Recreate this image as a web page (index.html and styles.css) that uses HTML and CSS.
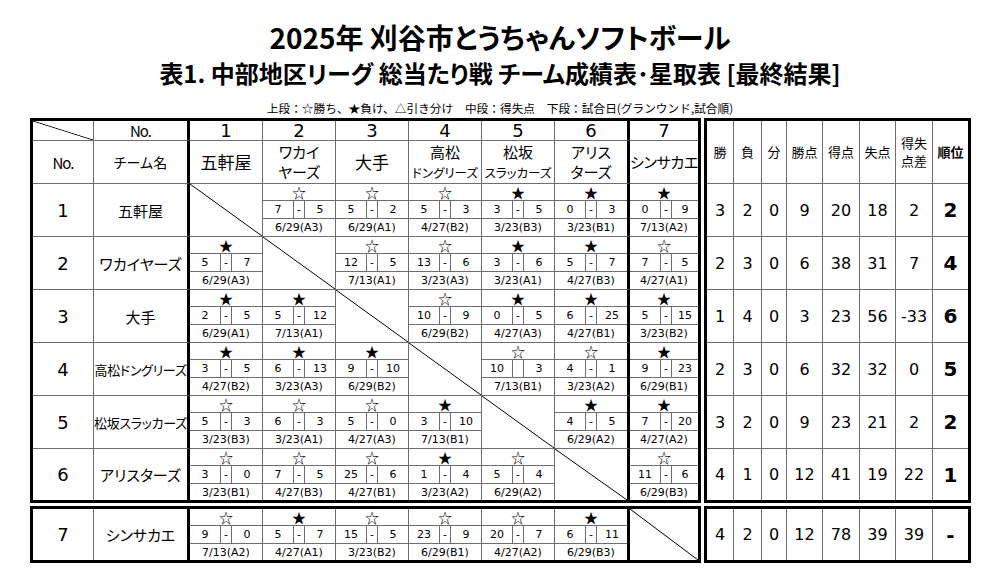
FILE: index.html
```html
<!DOCTYPE html>
<html lang="ja">
<head>
<meta charset="utf-8">
<title>星取表</title>
<link rel="stylesheet" href="styles.css">
</head>
<body>
<div class="page">
  <h1 class="title">2025年 刈谷市とうちゃんソフトボール</h1>
  <h2 class="subtitle">表1. 中部地区リーグ 総当たり戦 チーム成績表･星取表 [最終結果]</h2>
  <p class="legend">上段：☆勝ち、★負け、△引き分け　中段：得失点　下段：試合日(グランウンド,試合順)</p>

  <div class="board">
    <div class="block">
      <table class="matrix">
        <colgroup><col class="w-no"><col class="w-name"><col class="w-c"><col class="w-c"><col class="w-c"><col class="w-c"><col class="w-c"><col class="w-c6"><col class="w-c7"></colgroup>
        <tr class="hA"><td class="dg"></td><td class="nolbl">No.</td><td>1</td><td>2</td><td>3</td><td>4</td><td>5</td><td>6</td><td>7</td></tr>
        <tr class="hB"><td class="lbl">No.</td><td class="lbl sm">チーム名</td><td class="hn">五軒屋</td><td class="hn two">ワカイ<br>ヤーズ</td><td class="hn">大手</td><td class="hn two">高松<br><span class="hs">ドングリーズ</span></td><td class="hn two">松坂<br><span class="hs">スラッカーズ</span></td><td class="hn two">アリス<br>ターズ</td><td class="hn nar">シンサカエ</td></tr>

        <tr class="r"><td class="no">1</td><td class="name">五軒屋</td>
          <td class="dg"></td>
          <td><div class="m"><div class="st">☆</div><div class="sc"><span>7</span><span>-</span><span>5</span></div><div class="dt">6/29(A3)</div></div></td>
          <td><div class="m"><div class="st">☆</div><div class="sc"><span>5</span><span>-</span><span>2</span></div><div class="dt">6/29(A1)</div></div></td>
          <td><div class="m"><div class="st">☆</div><div class="sc"><span>5</span><span>-</span><span>3</span></div><div class="dt">4/27(B2)</div></div></td>
          <td><div class="m"><div class="st">★</div><div class="sc"><span>3</span><span>-</span><span>5</span></div><div class="dt">3/23(B3)</div></div></td>
          <td><div class="m"><div class="st">★</div><div class="sc"><span>0</span><span>-</span><span>3</span></div><div class="dt">3/23(B1)</div></div></td>
          <td><div class="m"><div class="st">★</div><div class="sc"><span>0</span><span>-</span><span>9</span></div><div class="dt">7/13(A2)</div></div></td>
        </tr>
        <tr class="r"><td class="no">2</td><td class="name">ワカイヤーズ</td>
          <td><div class="m"><div class="st">★</div><div class="sc"><span>5</span><span>-</span><span>7</span></div><div class="dt">6/29(A3)</div></div></td>
          <td class="dg"></td>
          <td><div class="m"><div class="st">☆</div><div class="sc"><span>12</span><span>-</span><span>5</span></div><div class="dt">7/13(A1)</div></div></td>
          <td><div class="m"><div class="st">☆</div><div class="sc"><span>13</span><span>-</span><span>6</span></div><div class="dt">3/23(A3)</div></div></td>
          <td><div class="m"><div class="st">★</div><div class="sc"><span>3</span><span>-</span><span>6</span></div><div class="dt">3/23(A1)</div></div></td>
          <td><div class="m"><div class="st">★</div><div class="sc"><span>5</span><span>-</span><span>7</span></div><div class="dt">4/27(B3)</div></div></td>
          <td><div class="m"><div class="st">☆</div><div class="sc"><span>7</span><span>-</span><span>5</span></div><div class="dt">4/27(A1)</div></div></td>
        </tr>
        <tr class="r"><td class="no">3</td><td class="name">大手</td>
          <td><div class="m"><div class="st">★</div><div class="sc"><span>2</span><span>-</span><span>5</span></div><div class="dt">6/29(A1)</div></div></td>
          <td><div class="m"><div class="st">★</div><div class="sc"><span>5</span><span>-</span><span>12</span></div><div class="dt">7/13(A1)</div></div></td>
          <td class="dg"></td>
          <td><div class="m"><div class="st">☆</div><div class="sc"><span>10</span><span>-</span><span>9</span></div><div class="dt">6/29(B2)</div></div></td>
          <td><div class="m"><div class="st">★</div><div class="sc"><span>0</span><span>-</span><span>5</span></div><div class="dt">4/27(A3)</div></div></td>
          <td><div class="m"><div class="st">★</div><div class="sc"><span>6</span><span>-</span><span>25</span></div><div class="dt">4/27(B1)</div></div></td>
          <td><div class="m"><div class="st">★</div><div class="sc"><span>5</span><span>-</span><span>15</span></div><div class="dt">3/23(B2)</div></div></td>
        </tr>
        <tr class="r"><td class="no">4</td><td class="name small">高松ドングリーズ</td>
          <td><div class="m"><div class="st">★</div><div class="sc"><span>3</span><span>-</span><span>5</span></div><div class="dt">4/27(B2)</div></div></td>
          <td><div class="m"><div class="st">★</div><div class="sc"><span>6</span><span>-</span><span>13</span></div><div class="dt">3/23(A3)</div></div></td>
          <td><div class="m"><div class="st">★</div><div class="sc"><span>9</span><span>-</span><span>10</span></div><div class="dt">6/29(B2)</div></div></td>
          <td class="dg"></td>
          <td><div class="m"><div class="st">☆</div><div class="sc"><span>10</span><span></span><span>3</span></div><div class="dt">7/13(B1)</div></div></td>
          <td><div class="m"><div class="st">☆</div><div class="sc"><span>4</span><span>-</span><span>1</span></div><div class="dt">3/23(A2)</div></div></td>
          <td><div class="m"><div class="st">★</div><div class="sc"><span>9</span><span>-</span><span>23</span></div><div class="dt">6/29(B1)</div></div></td>
        </tr>
        <tr class="r"><td class="no">5</td><td class="name small">松坂スラッカーズ</td>
          <td><div class="m"><div class="st">☆</div><div class="sc"><span>5</span><span>-</span><span>3</span></div><div class="dt">3/23(B3)</div></div></td>
          <td><div class="m"><div class="st">☆</div><div class="sc"><span>6</span><span>-</span><span>3</span></div><div class="dt">3/23(A1)</div></div></td>
          <td><div class="m"><div class="st">☆</div><div class="sc"><span>5</span><span>-</span><span>0</span></div><div class="dt">4/27(A3)</div></div></td>
          <td><div class="m"><div class="st">★</div><div class="sc"><span>3</span><span>-</span><span>10</span></div><div class="dt">7/13(B1)</div></div></td>
          <td class="dg"></td>
          <td><div class="m"><div class="st">★</div><div class="sc"><span>4</span><span>-</span><span>5</span></div><div class="dt">6/29(A2)</div></div></td>
          <td><div class="m"><div class="st">★</div><div class="sc"><span>7</span><span>-</span><span>20</span></div><div class="dt">4/27(A2)</div></div></td>
        </tr>
        <tr class="r last"><td class="no">6</td><td class="name">アリスターズ</td>
          <td><div class="m"><div class="st">☆</div><div class="sc"><span>3</span><span>-</span><span>0</span></div><div class="dt">3/23(B1)</div></div></td>
          <td><div class="m"><div class="st">☆</div><div class="sc"><span>7</span><span>-</span><span>5</span></div><div class="dt">4/27(B3)</div></div></td>
          <td><div class="m"><div class="st">☆</div><div class="sc"><span>25</span><span>-</span><span>6</span></div><div class="dt">4/27(B1)</div></div></td>
          <td><div class="m"><div class="st">★</div><div class="sc"><span>1</span><span>-</span><span>4</span></div><div class="dt">3/23(A2)</div></div></td>
          <td><div class="m"><div class="st">☆</div><div class="sc"><span>5</span><span>-</span><span>4</span></div><div class="dt">6/29(A2)</div></div></td>
          <td class="dg"></td>
          <td><div class="m"><div class="st">☆</div><div class="sc"><span>11</span><span>-</span><span>6</span></div><div class="dt">6/29(B3)</div></div></td>
        </tr>
      </table>

      <table class="stats">
        <colgroup><col class="s1"><col class="s2"><col class="s3"><col class="s4"><col class="s5"><col class="s6"><col class="s7"><col class="s8"></colgroup>
        <tr class="sh"><td>勝</td><td>負</td><td>分</td><td>勝点</td><td>得点</td><td>失点</td><td class="two">得失<br>点差</td><td class="rkh">順位</td></tr>
        <tr class="r"><td>3</td><td>2</td><td>0</td><td>9</td><td>20</td><td>18</td><td>2</td><td class="rk">2</td></tr>
        <tr class="r"><td>2</td><td>3</td><td>0</td><td>6</td><td>38</td><td>31</td><td>7</td><td class="rk">4</td></tr>
        <tr class="r"><td>1</td><td>4</td><td>0</td><td>3</td><td>23</td><td>56</td><td>-33</td><td class="rk">6</td></tr>
        <tr class="r"><td>2</td><td>3</td><td>0</td><td>6</td><td>32</td><td>32</td><td>0</td><td class="rk">5</td></tr>
        <tr class="r"><td>3</td><td>2</td><td>0</td><td>9</td><td>23</td><td>21</td><td>2</td><td class="rk">2</td></tr>
        <tr class="r last"><td>4</td><td>1</td><td>0</td><td>12</td><td>41</td><td>19</td><td>22</td><td class="rk">1</td></tr>
      </table>
    </div>

    <div class="block">
      <table class="matrix">
        <colgroup><col class="w-no"><col class="w-name"><col class="w-c"><col class="w-c"><col class="w-c"><col class="w-c"><col class="w-c"><col class="w-c6"><col class="w-c7"></colgroup>
        <tr class="r last"><td class="no">7</td><td class="name">シンサカエ</td>
          <td><div class="m"><div class="st">☆</div><div class="sc"><span>9</span><span>-</span><span>0</span></div><div class="dt">7/13(A2)</div></div></td>
          <td><div class="m"><div class="st">★</div><div class="sc"><span>5</span><span>-</span><span>7</span></div><div class="dt">4/27(A1)</div></div></td>
          <td><div class="m"><div class="st">☆</div><div class="sc"><span>15</span><span>-</span><span>5</span></div><div class="dt">3/23(B2)</div></div></td>
          <td><div class="m"><div class="st">☆</div><div class="sc"><span>23</span><span>-</span><span>9</span></div><div class="dt">6/29(B1)</div></div></td>
          <td><div class="m"><div class="st">☆</div><div class="sc"><span>20</span><span>-</span><span>7</span></div><div class="dt">4/27(A2)</div></div></td>
          <td><div class="m"><div class="st">★</div><div class="sc"><span>6</span><span>-</span><span>11</span></div><div class="dt">6/29(B3)</div></div></td>
          <td class="dg"></td>
        </tr>
      </table>
      <table class="stats">
        <colgroup><col class="s1"><col class="s2"><col class="s3"><col class="s4"><col class="s5"><col class="s6"><col class="s7"><col class="s8"></colgroup>
        <tr class="r last"><td>4</td><td>2</td><td>0</td><td>12</td><td>78</td><td>39</td><td>39</td><td class="rk">-</td></tr>
      </table>
    </div>
  </div>
</div>
</body>
</html>
```

FILE: styles.css
```css
* { box-sizing: border-box; }

body {
  margin: 0;
  background: #fff;
  color: #000;
  font-family: "Noto Sans CJK JP", sans-serif;
  font-feature-settings: "palt";
}

.page { width: 1000px; }

.title {
  margin: 0;
  padding-top: 19px;
  font-size: 28px;
  line-height: 36px;
  font-weight: 700;
  text-align: center;
}

.subtitle {
  margin: 3px 0 0;
  font-size: 24px;
  line-height: 30px;
  font-weight: 700;
  text-align: center;
}

.legend {
  margin: 13px 0 0;
  font-size: 11.7px;
  line-height: 14px;
  text-align: center;
  font-feature-settings: normal;
}

.board {
  margin: 3px 0 0 30px;
  display: flex;
  flex-direction: column;
  gap: 3px;
}

.block {
  display: flex;
  gap: 3px;
  align-items: flex-start;
}

table {
  border-collapse: separate;
  border-spacing: 0;
  table-layout: fixed;
  border: 3px solid #000;
}

td {
  padding: 0;
  border-right: 1px solid #6e6e6e;
  border-bottom: 1px solid #6e6e6e;
  text-align: center;
  vertical-align: middle;
  white-space: nowrap;
}

tr > td:last-child { border-right: 0; }
tr:last-child > td { border-bottom: 0; }

/* main matrix */
.matrix { width: 671px; }
.w-no { width: 61px; }
.w-name { width: 96px; }
.w-c { width: 73px; }
.w-c6 { width: 75px; }
.w-c7 { width: 68px; }

.matrix td:nth-child(2),
.matrix td:nth-child(8) { border-right: 3px solid #000; }

.hA td {
  height: 20px;
  font-family: "DejaVu Sans", sans-serif;
  font-size: 18px;
  line-height: 18px;
}
.hA td.nolbl {
  font-family: "Noto Sans CJK JP", sans-serif;
  font-size: 15px;
  letter-spacing: -1px;
}

.hB td { height: 43px; }
.hB .lbl { font-size: 15px; letter-spacing: -1px; }
.hB .lbl.sm { font-size: 14px; letter-spacing: 0; }
.hB .hn { font-size: 17px; line-height: 20px; }
.hB .hn.two { font-size: 15px; line-height: 20px; }
.hB .hn.nar { font-size: 15px; letter-spacing: -0.3px; }
.hB .hs { font-size: 12.5px; }

.matrix .r td { height: 53px; }
.matrix .r.last td { height: 51px; }

.no {
  font-family: "DejaVu Sans", sans-serif;
  font-size: 18px;
}

.name { font-size: 15px; }
.name.small { font-size: 13px; letter-spacing: -0.3px; }

.dg {
  background: linear-gradient(to top right, transparent calc(50% - 0.8px), #000 50%, transparent calc(50% + 0.8px));
}

.m {
  display: grid;
  grid-template-rows: 17px 18px 1fr;
  height: 52px;
  font-family: "DejaVu Sans", sans-serif;
  font-size: 11px;
}
.r.last .m { height: 51px; }

.st {
  border-bottom: 1px solid #6e6e6e;
  font-family: "Noto Sans CJK JP", sans-serif;
  font-feature-settings: normal;
  font-size: 14px;
  line-height: 16px;
}

.sc {
  display: grid;
  grid-template-columns: 31px 11px 1fr;
  border-bottom: 1px solid #6e6e6e;
}
.sc span {
  display: flex;
  align-items: center;
  justify-content: center;
  line-height: 1;
}
.sc span:nth-child(1),
.sc span:nth-child(2) { border-right: 1px solid #6e6e6e; }

.dt {
  display: flex;
  align-items: center;
  justify-content: center;
  line-height: 1;
}

/* stats */
.stats { width: 267px; }
.s1 { width: 27px; }
.s2 { width: 28px; }
.s3 { width: 25px; }
.s4 { width: 36px; }
.s5 { width: 37px; }
.s6 { width: 36px; }
.s7 { width: 37px; }
.s8 { width: 35px; }

.sh td {
  height: 63px;
  font-size: 13px;
  line-height: 18px;
}
.sh td.rkh { font-weight: 700; }

.stats .r td {
  height: 53px;
  font-family: "DejaVu Sans", sans-serif;
  font-size: 16px;
}
.stats .r.last td { height: 51px; }
.stats .r td.rk {
  font-weight: 700;
  font-size: 20px;
}
```
